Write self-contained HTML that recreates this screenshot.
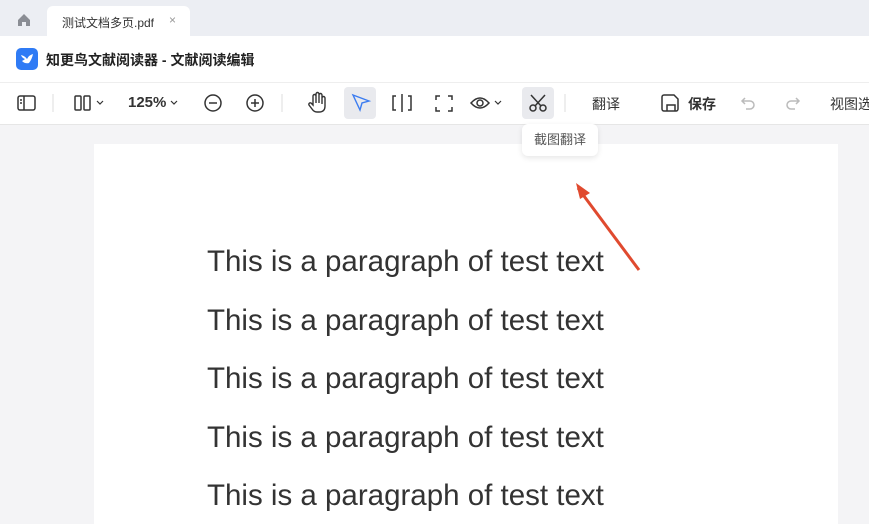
<html><head><style>
body{margin:0;width:869px;height:518px;overflow:hidden;background:#f4f4f6;font-family:"Liberation Sans","Noto Sans CJK SC",sans-serif;position:relative}
.a{position:absolute;white-space:nowrap}
.tabs{left:0;top:0;width:869px;height:36px;background:#eceef3}
.tab{left:47px;top:6px;width:143px;height:30px;background:#fff;border-radius:6px 6px 0 0;font-size:12px;color:#333}
.title{left:0;top:36px;width:869px;height:46px;background:#fff;border-bottom:1px solid #eee}
.tool{left:0;top:83px;width:869px;height:41px;background:#fff;border-bottom:1px solid #e6e6e6}
.p{position:absolute;left:207px;font-size:29.5px;color:#333;white-space:nowrap}
</style></head><body>
<div class="a tabs"></div>
<svg class="a" style="left:16px;top:12px" width="16" height="16"><path d="M2 8L8 2L14 8V14H10V10H6V14H2Z" fill="#8a8d94"/></svg>
<div class="a tab"><span class="a" style="left:15px;top:8px">测试文档多页.pdf</span><span class="a" style="left:122px;top:7px;color:#999">×</span></div>
<div class="a title"></div>
<div class="a" style="left:16px;top:48px;width:22px;height:22px;background:#2f7bf5;border-radius:5px"></div>
<svg class="a" style="left:19px;top:51px" width="16" height="16"><path d="M2 4Q6 5 8 8Q10 4 14 3Q13 8 10 12Q6 13 3 10Q5 9 6 8Q3 7 2 4Z" fill="#fff"/></svg>
<div class="a" style="left:46px;top:50px;font-size:14px;font-weight:bold;color:#222">知更鸟文献阅读器 - 文献阅读编辑</div>
<div class="a tool"></div>
<svg class="a" style="left:0;top:83px" width="869" height="41" fill="none" stroke="#333" stroke-width="1.5">
<rect x="18" y="13" width="17" height="14" rx="2"/><line x1="24" y1="13" x2="24" y2="27"/><line x1="20" y1="17" x2="22" y2="17"/><line x1="20" y1="20" x2="22" y2="20"/>
<line x1="53" y1="11" x2="53" y2="29" stroke="#ddd" stroke-width="1"/>
<rect x="75" y="13" width="6" height="14" rx="1"/><rect x="84" y="13" width="6" height="14" rx="1"/><path d="M97 18l3 3l3-3" stroke-width="1.2"/>
<path d="M171 18l3 3l3-3" stroke-width="1.2"/>
<circle cx="213" cy="20" r="8"/><line x1="209" y1="20" x2="217" y2="20"/>
<circle cx="255" cy="20" r="8"/><line x1="251" y1="20" x2="259" y2="20"/><line x1="255" y1="16" x2="255" y2="24"/>
<line x1="282" y1="11" x2="282" y2="29" stroke="#ddd" stroke-width="1"/>
<path d="M313 22V13a1.5 1.5 0 013 0v7V11a1.5 1.5 0 013 0v9V12a1.5 1.5 0 013 0v9v-6a1.5 1.5 0 013 0v8q0 6-6 6h-2q-3 0-5-3l-3-4a1.5 1.5 0 012-2z" stroke-width="1.4"/>
<rect x="344" y="4" width="32" height="32" rx="4" fill="#e9eaee" stroke="none"/>
<path d="M353 12l16 6l-7 2l-2 7z" stroke="#3b7cf0" stroke-width="1.4"/>
<path d="M396 13h-3v14h3M408 13h3v14h-3M402 11v18"/>
<path d="M436 17v-4h4M448 13h4v4M452 24v4h-4M440 28h-4v-4"/>
<path d="M471 20q9-10 18 0q-9 10-18 0z"/><circle cx="480" cy="20" r="3"/><path d="M495 18l3 3l3-3" stroke-width="1.2"/>
<rect x="522" y="4" width="32" height="32" rx="4" fill="#e9eaee" stroke="none"/>
<circle cx="533" cy="25" r="3"/><circle cx="543" cy="25" r="3"/><path d="M531 12l10 11M545 12l-10 11"/>
<line x1="565" y1="11" x2="565" y2="29" stroke="#ddd" stroke-width="1"/>
<path d="M664 12h10l4 4v10a2 2 0 01-2 2h-12a2 2 0 01-2-2v-12a2 2 0 012-2zM667 28v-6h8v6"/>
<path d="M745 15l-3 3l3 3M742 18h8a4 4 0 010 8h-4" stroke="#bbb"/>
<path d="M796 15l3 3l-3 3M799 18h-8a4 4 0 000 8h4" stroke="#bbb"/>
</svg>
<div class="a" style="left:128px;top:94px;font-size:15px;font-weight:bold;color:#333">125%</div>
<div class="a" style="left:592px;top:94px;font-size:14px;color:#333">翻译</div>
<div class="a" style="left:688px;top:94px;font-size:14px;font-weight:bold;color:#333">保存</div>
<div class="a" style="left:830px;top:94px;font-size:14px;color:#333">视图选</div>
<div class="a" style="left:94px;top:144px;width:744px;height:380px;background:#fff"></div>
<div class="a" style="left:522px;top:124px;width:76px;height:32px;background:#fff;border-radius:6px;box-shadow:0 2px 6px rgba(0,0,0,.1);font-size:13px;color:#555;text-align:center;line-height:32px">截图翻译</div>
<div class="p" style="top:245px">This is a paragraph of test text</div>
<div class="p" style="top:304px">This is a paragraph of test text</div>
<div class="p" style="top:362px">This is a paragraph of test text</div>
<div class="p" style="top:421px">This is a paragraph of test text</div>
<div class="p" style="top:479px">This is a paragraph of test text</div>
<svg class="a" style="left:560px;top:170px" width="100" height="110"><path d="M79 100L18 18" stroke="#e04a2f" stroke-width="3"/><path d="M16 13L30 23L20 29Z" fill="#e04a2f"/></svg>
</body></html>
